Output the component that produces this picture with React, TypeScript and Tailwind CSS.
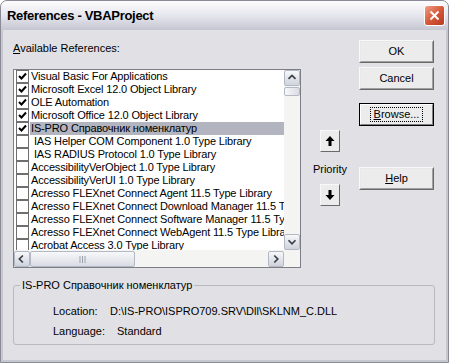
import React from 'react';

const font = { fontFamily: '"Liberation Sans", Arial, sans-serif' };

const rows: { label: string; checked: boolean; selected?: boolean; pad?: boolean }[] = [
  { label: 'Visual Basic For Applications', checked: true },
  { label: 'Microsoft Excel 12.0 Object Library', checked: true },
  { label: 'OLE Automation', checked: true },
  { label: 'Microsoft Office 12.0 Object Library', checked: true },
  { label: 'IS-PRO Справочник номенклатур', checked: true, selected: true },
  { label: 'IAS Helper COM Component 1.0 Type Library', checked: false, pad: true },
  { label: 'IAS RADIUS Protocol 1.0 Type Library', checked: false, pad: true },
  { label: 'AccessibilityVerObject 1.0 Type Library', checked: false },
  { label: 'AccessibilityVerUI 1.0 Type Library', checked: false },
  { label: 'Acresso FLEXnet Connect Agent 11.5 Type Library', checked: false },
  { label: 'Acresso FLEXnet Connect Download Manager 11.5 Type Library', checked: false },
  { label: 'Acresso FLEXnet Connect Software Manager 11.5 Type Library', checked: false },
  { label: 'Acresso FLEXnet Connect WebAgent 11.5 Type Library', checked: false },
  { label: 'Acrobat Access 3.0 Type Library', checked: false },
];

function CheckBox({ checked }: { checked: boolean }) {
  return (
    <div className="w-[13px] h-[13px] shrink-0 bg-white border border-[#6f6f6f] flex items-center justify-center">
      {checked && (
        <svg width="9" height="9" viewBox="0 0 9 9">
          <path d="M1 4 L3.5 6.5 L8 1.5" fill="none" stroke="#000" strokeWidth="2" />
        </svg>
      )}
    </div>
  );
}

function ScrollBtn({ dir }: { dir: 'up' | 'down' | 'left' | 'right' }) {
  const paths: Record<string, string> = {
    up: 'M4 9 L8 5 L12 9',
    down: 'M4 6 L8 10 L12 6',
    left: 'M9 4 L5 8 L9 12',
    right: 'M6 4 L10 8 L6 12',
  };
  return (
    <div className="w-[16px] h-[16px] shrink-0 rounded-[2px] border border-[#b3b9c4] bg-gradient-to-b from-[#f7f8fa] to-[#cfd3db] flex items-center justify-center">
      <svg width="16" height="16" viewBox="0 0 16 16">
        <path d={paths[dir]} fill="none" stroke="#3a3f4a" strokeWidth="2" />
      </svg>
    </div>
  );
}

function Button({ children, def }: { children: React.ReactNode; def?: boolean }) {
  return (
    <div
      className={`w-[75px] h-[23px] flex items-center justify-center text-[11px] text-black bg-[#ececec] border ${
        def ? 'border-black' : 'border-t-[#f8f8f8] border-l-[#f8f8f8] border-b-[#6a6a6a] border-r-[#6a6a6a]'
      }`}
    >
      <div
        className={`w-full h-full flex items-center justify-center border ${
          def
            ? 'border-t-white border-l-white border-b-[#808080] border-r-[#808080]'
            : 'border-t-[#e8e8e8] border-l-[#e8e8e8] border-b-[#a0a0a0] border-r-[#a0a0a0]'
        }`}
      >
        {def ? (
          <span className="border border-dotted border-black px-[3px] leading-[13px]">{children}</span>
        ) : (
          children
        )}
      </div>
    </div>
  );
}

function ArrowBtn({ up }: { up?: boolean }) {
  return (
    <div className="w-[20px] h-[22px] bg-[#ececec] border border-t-[#f8f8f8] border-l-[#f8f8f8] border-b-[#6a6a6a] border-r-[#6a6a6a] flex items-center justify-center">
      <svg width="10" height="10" viewBox="0 0 10 10">
        {up ? (
          <path d="M5 0 L9.5 5 L6.5 5 L6.5 10 L3.5 10 L3.5 5 L0.5 5 Z" fill="#000" />
        ) : (
          <path d="M5 10 L9.5 5 L6.5 5 L6.5 0 L3.5 0 L3.5 5 L0.5 5 Z" fill="#000" />
        )}
      </svg>
    </div>
  );
}

export default function App() {
  return (
    <div className="w-[449px] h-[363px] overflow-hidden bg-white" style={font}>
      <div className="w-[449px] h-[363px] flex flex-col rounded-t-[7px] bg-[#c7c7d0] border border-[#8a8a96]">
        {/* Title bar */}
        <div className="h-[29px] shrink-0 flex items-center justify-between pl-[6px] pr-[3px] rounded-t-[6px] bg-gradient-to-b from-[#fdfdfe] via-[#e6e6ee] to-[#c6c6d2]">
          <span className="text-[13px] font-bold text-black tracking-[-0.3px]">References - VBAProject</span>
          <div className="w-[21px] h-[21px] rounded-[3px] border border-white bg-gradient-to-br from-[#ee9e86] via-[#d7583a] to-[#b63a22] flex items-center justify-center">
            <svg width="11" height="11" viewBox="0 0 11 11">
              <path d="M1.5 1.5 L9.5 9.5 M9.5 1.5 L1.5 9.5" stroke="#fff" strokeWidth="2" />
            </svg>
          </div>
        </div>

        {/* Body */}
        <div className="flex-1 mx-[2px] mb-[2px] bg-[#e1e1e5] flex flex-col px-[10px] pt-[10px] text-[11px] text-black">
          <div className="flex">
            {/* Left column */}
            <div className="w-[288px] flex flex-col">
              <div className="h-[14px] leading-[14px] mt-[1px]">
                <span className="underline">A</span>vailable References:
              </div>
              <div className="mt-[14px] w-[288px] h-[199px] border border-[#7d7d85] bg-white flex flex-col">
                <div className="flex h-[180px]">
                  <div className="w-[270px] overflow-hidden">
                    {rows.map((r) => (
                      <div key={r.label} className="h-[13px] flex items-center pl-[2px]">
                        <CheckBox checked={r.checked} />
                        <div
                          className={`ml-[1px] h-[13px] leading-[13px] flex-1 whitespace-nowrap pl-[1px] tracking-[-0.15px] ${
                            r.selected ? 'bg-[#b2b4bf]' : ''
                          }`}
                        >
                          {r.pad ? '\u00a0' : ''}
                          {r.label}
                        </div>
                      </div>
                    ))}
                  </div>
                  <div className="w-[16px] flex flex-col bg-[#f4f4f2]">
                    <ScrollBtn dir="up" />
                    <div className="h-[9px] mt-[1px] rounded-[2px] border border-[#b3b9c4] bg-gradient-to-r from-[#f7f8fa] to-[#d9dce3]" />
                    <div className="flex-1" />
                    <ScrollBtn dir="down" />
                  </div>
                </div>
                <div className="flex h-[17px] bg-[#f4f4f2] pt-[1px]">
                  <div className="w-[270px] flex">
                    <ScrollBtn dir="left" />
                    <div className="w-[105px] h-[16px] rounded-[2px] border border-[#b3b9c4] bg-gradient-to-b from-[#f7f8fa] to-[#d9dce3] flex items-center justify-center">
                      <svg width="8" height="7" viewBox="0 0 8 7">
                        <path d="M1 0 V7 M3.5 0 V7 M6 0 V7" stroke="#9aa0ab" strokeWidth="1" />
                      </svg>
                    </div>
                    <div className="flex-1" />
                    <ScrollBtn dir="right" />
                  </div>
                </div>
              </div>
            </div>

            {/* Middle: priority */}
            <div className="w-[58px] flex flex-col items-center pt-[90px]">
              <ArrowBtn up />
              <div className="mt-[10px] h-[14px] leading-[14px]">Priority</div>
              <div className="mt-[8px]">
                <ArrowBtn />
              </div>
            </div>

            {/* Right: buttons */}
            <div className="w-[75px] flex flex-col">
              <Button>OK</Button>
              <div className="mt-[4px]">
                <Button>Cancel</Button>
              </div>
              <div className="mt-[13px]">
                <Button def>
                  <span className="underline">B</span>rowse...
                </Button>
              </div>
              <div className="mt-[41px]">
                <Button>
                  <span className="underline">H</span>elp
                </Button>
              </div>
            </div>
          </div>

          {/* Group box */}
          <fieldset className="mt-[11px] w-[422px] h-[66px] border border-[#b8b8bf] rounded-[3px] px-[39px]">
            <legend className="-ml-[33px] px-[2px] leading-[12px]">IS-PRO Справочник номенклатур</legend>
            <div className="mt-[13px] flex h-[14px] leading-[14px]">
              <span className="w-[57px]">Location:</span>
              <span>D:\IS-PRO\ISPRO709.SRV\Dll\SKLNM_C.DLL</span>
            </div>
            <div className="mt-[6px] flex h-[14px] leading-[14px]">
              <span className="w-[64px]">Language:</span>
              <span>Standard</span>
            </div>
          </fieldset>
        </div>
      </div>
    </div>
  );
}
